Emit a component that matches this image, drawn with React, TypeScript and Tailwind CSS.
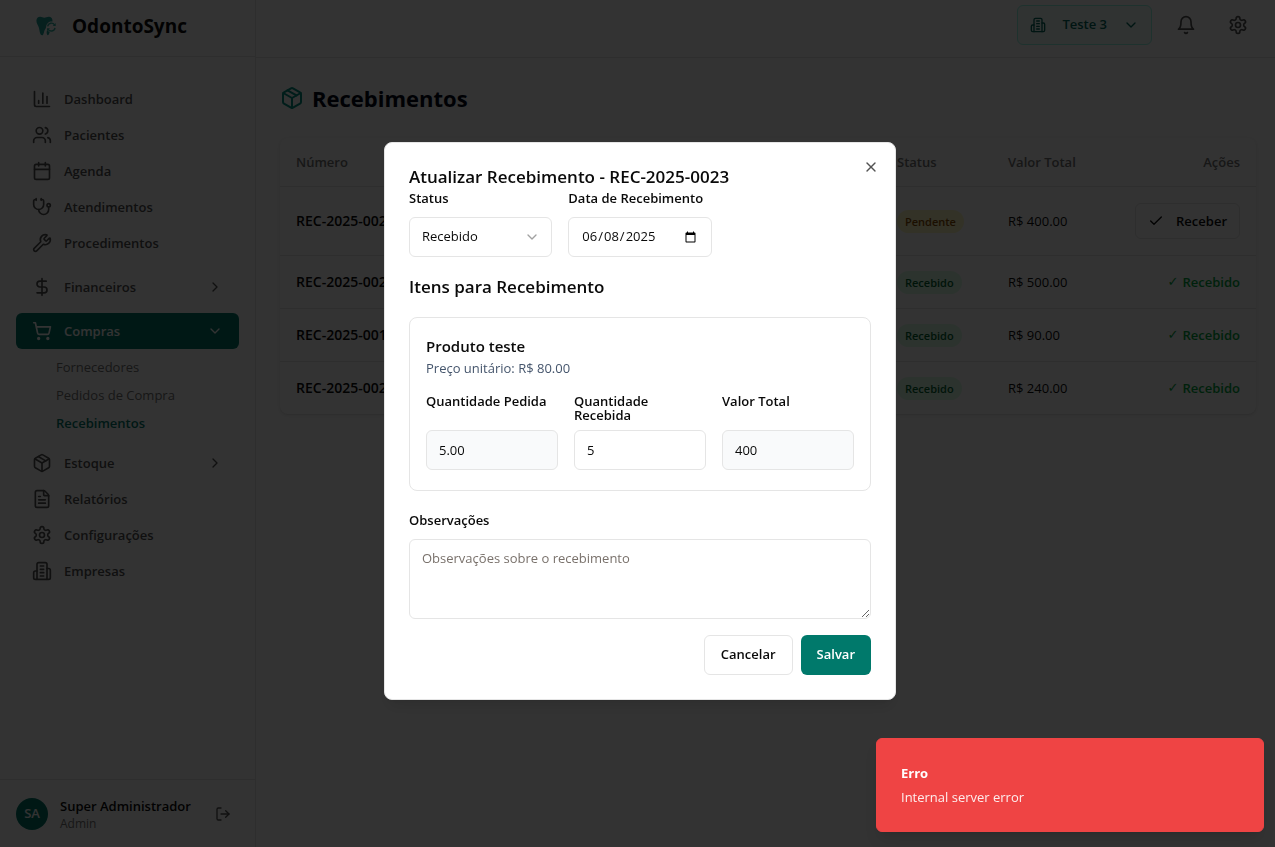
import React from "react";
import {
  Calendar, ChartColumn, Check, ChevronDown, ChevronRight, DollarSign, FileText,
  LogOut, Package, ShoppingCart, Stethoscope, Users, Wrench, X,
} from "lucide-react";

type Icon = React.ComponentType<{ className?: string }>;

function strokeIcon(paths: string[], center?: React.ReactNode): Icon {
  return function StrokeIcon({ className }) {
    return (
      <svg viewBox="0 0 24 24" className={className} fill="none" stroke="currentColor" strokeWidth="2" strokeLinecap="round" strokeLinejoin="round" aria-hidden="true">
        {paths.map((d) => (
          <path key={d} d={d} />
        ))}
        {center}
      </svg>
    );
  };
}

const Building = strokeIcon([
  "M6 22V4a2 2 0 0 1 2-2h8a2 2 0 0 1 2 2v18Z",
  "M6 12H4a2 2 0 0 0-2 2v6a2 2 0 0 0 2 2h2",
  "M18 9h2a2 2 0 0 1 2 2v9a2 2 0 0 1-2 2h-2",
  "M10 6h4",
  "M10 10h4",
  "M10 14h4",
  "M10 18h4",
]);

const Bell = strokeIcon(["M6 8a6 6 0 0 1 12 0c0 7 3 9 3 9H3s3-2 3-9", "M10.3 21a1.94 1.94 0 0 0 3.4 0"]);

const Gear = strokeIcon(
  [
    "M12.22 2h-.44a2 2 0 0 0-2 2v.18a2 2 0 0 1-1 1.73l-.43.25a2 2 0 0 1-2 0l-.15-.08a2 2 0 0 0-2.73.73l-.22.38a2 2 0 0 0 .73 2.73l.15.1a2 2 0 0 1 1 1.72v.51a2 2 0 0 1-1 1.74l-.15.09a2 2 0 0 0-.73 2.73l.22.38a2 2 0 0 0 2.73.73l.15-.08a2 2 0 0 1 2 0l.43.25a2 2 0 0 1 1 1.73V20a2 2 0 0 0 2 2h.44a2 2 0 0 0 2-2v-.18a2 2 0 0 1 1-1.73l.43-.25a2 2 0 0 1 2 0l.15.08a2 2 0 0 0 2.73-.73l.22-.39a2 2 0 0 0-.73-2.73l-.15-.08a2 2 0 0 1-1-1.74v-.5a2 2 0 0 1 1-1.74l.15-.09a2 2 0 0 0 .73-2.73l-.22-.38a2 2 0 0 0-2.73-.73l-.15.08a2 2 0 0 1-2 0l-.43-.25a2 2 0 0 1-1-1.73V4a2 2 0 0 0-2-2z",
  ],
  <circle cx="12" cy="12" r="3" />,
);

const topItems: { label: string; icon: Icon }[] = [
  { label: "Dashboard", icon: ChartColumn },
  { label: "Pacientes", icon: Users },
  { label: "Agenda", icon: Calendar },
  { label: "Atendimentos", icon: Stethoscope },
  { label: "Procedimentos", icon: Wrench },
];

const bottomItems: { label: string; icon: Icon; expandable?: boolean }[] = [
  { label: "Estoque", icon: Package, expandable: true },
  { label: "Relatórios", icon: FileText },
  { label: "Configurações", icon: Gear },
  { label: "Empresas", icon: Building },
];

const rows = [
  { number: "REC-2025-0023", status: "Pendente", total: "R$ 400.00" },
  { number: "REC-2025-0022", status: "Recebido", total: "R$ 500.00" },
  { number: "REC-2025-0019", status: "Recebido", total: "R$ 90.00" },
  { number: "REC-2025-0020", status: "Recebido", total: "R$ 240.00" },
];

function NavItem({ label, icon: I, expandable }: { label: string; icon: Icon; expandable?: boolean }) {
  return (
    <a href="#" className="flex h-9 items-center gap-3 rounded-md px-4 text-[13px] font-semibold text-neutral-600">
      <I className="size-5" />
      <span className="flex-1 pt-0.5">{label}</span>
      {expandable && <ChevronRight className="size-4" />}
    </a>
  );
}

function Logo() {
  return (
    <svg viewBox="0 0 20 20" className="size-5" aria-hidden="true">
      <path
        d="M4 .8C5.600.6 6.800 1.700 8.300 1.700S11.500.5 13.300.8c2.300.4 3.400 2 3.200 4.700-3.200-.5-6 1.700-6.300 5-.1 1.700-.9 2.200-1.500 3.500-.8 1.700-1 5.500-2.600 5.300-2.300-.3-2.500-4.800-3.200-7.600C2.300 9.300.2 7.500.4 4.500.5 2.300 2 1 4 .8Z"
        fill="#1fa098"
      />
      <path d="M11 14.300c.9.900 1.700 1.300 2.700 1.600-.6 1.500-.9 3.200-2.100 3.400-1.200-.8-1.100-3.300-.6-5Z" fill="#1fa098" />
      <path d="M11.700 10.300a3.800 3.800 0 0 1 7-1.300M19 11.800a3.800 3.800 0 0 1-7 1.400" fill="none" stroke="#36b3a5" strokeWidth="1.400" />
      <path d="M19.700 6.900v3h-3ZM11 15.300v-3h3Z" fill="#36b3a5" />
    </svg>
  );
}

function Sidebar() {
  return (
    <aside className="flex w-64 shrink-0 flex-col border-r border-neutral-200 bg-white">
      <div className="flex h-[57px] items-center gap-4 border-b border-neutral-200 pb-1 pl-9">
        <Logo />
        <span className="text-[19px] font-bold text-neutral-950">OdontoSync</span>
      </div>
      <nav className="flex-1 px-4 pt-6">
        {topItems.map((item) => (
          <NavItem key={item.label} {...item} />
        ))}
        <div className="py-2">
          <NavItem label="Financeiros" icon={DollarSign} expandable />
        </div>
        <a href="#" className="flex h-9 items-center gap-3 rounded-md bg-[#00796b] px-4 text-[13px] font-semibold text-white">
          <ShoppingCart className="size-5" />
          <span className="flex-1 pt-0.5">Compras</span>
          <ChevronDown className="size-4" />
        </a>
        <div className="mt-1 mb-2 pl-10 text-[13px] leading-7 text-neutral-500">
          <a href="#" className="block">Fornecedores</a>
          <a href="#" className="block">Pedidos de Compra</a>
          <a href="#" className="block font-semibold text-[#00796b]">Recebimentos</a>
        </div>
        {bottomItems.map((item) => (
          <NavItem key={item.label} {...item} />
        ))}
      </nav>
      <div className="flex h-[68px] items-center gap-3 border-t border-neutral-200 px-4">
        <span className="flex size-8 items-center justify-center rounded-full bg-[#00796b] text-[13px] font-semibold text-white">SA</span>
        <div className="flex-1">
          <p className="text-[13px] leading-5 font-semibold text-neutral-950">Super Administrador</p>
          <p className="text-[12px] leading-4 text-neutral-500">Admin</p>
        </div>
        <button aria-label="Sair" className="p-2 text-neutral-600">
          <LogOut className="size-4" />
        </button>
      </div>
    </aside>
  );
}

function ReceiptsTable() {
  return (
    <div className="overflow-hidden rounded-lg bg-white shadow-sm">
      <table className="w-full text-[13px] leading-5">
        <thead>
          <tr className="h-12 border-b border-neutral-200 text-left text-neutral-500">
            <th className="px-4 font-semibold">Número</th>
            <th className="w-[111px] px-4 font-semibold">Status</th>
            <th className="w-[108px] px-4 font-semibold">Valor Total</th>
            <th className="w-[156px] px-4 text-right font-semibold">Ações</th>
          </tr>
        </thead>
        <tbody>
          {rows.map((row) => {
            const pending = row.status === "Pendente";
            return (
              <tr key={row.number} className="border-b border-neutral-200 last:border-0">
                <td className="px-4 text-[14px] font-semibold text-neutral-950">{row.number}</td>
                <td className="px-4">
                  <span className={pending
                    ? "rounded-full bg-yellow-100 px-2 py-1 text-[11px] leading-4 font-semibold text-yellow-800"
                    : "rounded-full bg-green-100 px-2 py-1 text-[11px] leading-4 font-semibold text-green-800"}>
                    {row.status}
                  </span>
                </td>
                <td className="px-4 text-neutral-950">{row.total}</td>
                <td className="px-4 py-4">
                  {pending ? (
                    <button className="ml-auto flex h-9 items-center gap-3 rounded-md border border-neutral-200 px-3 font-semibold text-neutral-950">
                      <Check className="size-4" />
                      Receber
                    </button>
                  ) : (
                    <div className="flex h-5 items-center justify-end gap-1 font-semibold text-green-600">
                      <span className="font-['DejaVu_Sans',sans-serif] font-normal">✓</span>
                      Recebido
                    </div>
                  )}
                </td>
              </tr>
            );
          })}
        </tbody>
      </table>
    </div>
  );
}

const field = "h-10 w-full rounded-md border border-neutral-200 px-3 text-[13px] text-neutral-950";
const labelStyle = "text-[13px] leading-[14px] font-semibold text-neutral-950";

function ReceiptDialog() {
  return (
    <div className="fixed inset-0 flex items-center justify-center bg-black/80 pb-[5px] pl-[5px]">
      <form role="dialog" aria-labelledby="dialog-title" className="relative w-full max-w-lg rounded-lg border border-neutral-200 bg-white p-6 text-neutral-950 shadow-lg">
        <button type="button" aria-label="Fechar" className="absolute top-4 right-4 text-neutral-600">
          <X className="size-4" />
        </button>
        <h2 id="dialog-title" className="mb-1 text-[17px] leading-5 font-semibold">Atualizar Recebimento - REC-2025-0023</h2>
        <div className="grid grid-cols-3 gap-4">
          <div className="flex flex-col gap-3">
            <label htmlFor="status" className={labelStyle}>Status</label>
            <div className="relative">
              <select id="status" defaultValue="Recebido" className={field + " appearance-none bg-white"}>
                <option>Recebido</option>
                <option>Pendente</option>
              </select>
              <ChevronDown className="pointer-events-none absolute top-3 right-3 size-4 text-neutral-400" />
            </div>
          </div>
          <div className="flex flex-col gap-3">
            <label htmlFor="date" className={labelStyle + " whitespace-nowrap"}>Data de Recebimento</label>
            <input id="date" type="date" defaultValue="2025-06-08" className={field} />
          </div>
        </div>
        <h3 className="my-4 text-[17px] leading-7 font-semibold">Itens para Recebimento</h3>
        <div className="rounded-lg border border-neutral-200 px-4 pt-4 pb-5">
          <h4 className="text-[15px] leading-6 font-semibold">Produto teste</h4>
          <p className="text-[13px] leading-5 text-slate-600">Preço unitário: R$ 80.00</p>
          <div className="mt-4 grid grid-cols-3 gap-4">
            <div className="flex flex-col justify-between gap-2">
              <label htmlFor="ordered" className={labelStyle + " whitespace-nowrap"}>Quantidade Pedida</label>
              <input id="ordered" readOnly defaultValue="5.00" className={field + " bg-gray-50"} />
            </div>
            <div className="flex flex-col justify-between gap-2">
              <label htmlFor="received" className={labelStyle}>Quantidade Recebida</label>
              <input id="received" defaultValue="5" className={field} />
            </div>
            <div className="flex flex-col justify-between gap-2">
              <label htmlFor="total" className={labelStyle}>Valor Total</label>
              <input id="total" readOnly defaultValue="400" className={field + " bg-gray-50"} />
            </div>
          </div>
        </div>
        <div className="mt-[22px] flex flex-col gap-3">
          <label htmlFor="notes" className={labelStyle}>Observações</label>
          <textarea id="notes" placeholder="Observações sobre o recebimento" className="h-20 w-full rounded-md border border-neutral-200 px-3 py-2 text-[13px] leading-5 placeholder:text-stone-500" />
        </div>
        <div className="mt-4 flex justify-end gap-2 text-[13px] font-semibold">
          <button type="button" className="h-10 rounded-md border border-neutral-200 px-4">Cancelar</button>
          <button type="submit" className="h-10 rounded-md bg-[#00796b] px-4 text-white">Salvar</button>
        </div>
      </form>
    </div>
  );
}

export default function App() {
  return (
    <div className="flex min-h-screen bg-white font-['Open_Sans','Noto_Sans',sans-serif]">
      <Sidebar />
      <div className="min-w-0 flex-1 bg-[#fcfcfc]">
        <header className="flex h-[58px] items-center justify-end gap-3.5 border-b border-neutral-200 bg-white pr-[17px] pb-2">
          <button className="flex h-10 items-center gap-4 rounded-md border border-teal-200 bg-teal-50 px-3 text-[13px] font-semibold text-[#00695c]">
            <Building className="size-4" />
            Teste 3
            <ChevronDown className="size-4" />
          </button>
          <div className="flex gap-3 text-neutral-600">
            <button aria-label="Notificações" className="flex size-10 items-center justify-center">
              <Bell className="size-5" />
            </button>
            <button aria-label="Configurações" className="flex size-10 items-center justify-center">
              <Gear className="size-5" />
            </button>
          </div>
        </header>
        <main className="py-6 pr-[19px] pl-6">
          <h1 className="mb-6 flex items-center gap-2 text-[22px] leading-8 font-bold text-slate-950">
            <Package className="size-6 text-[#009080]" />
            Recebimentos
          </h1>
          <ReceiptsTable />
        </main>
      </div>
      <ReceiptDialog />
      <div role="alert" className="fixed right-[11px] bottom-[15px] w-[388px] rounded-md border border-[#ef4444] bg-[#ef4444] p-6 text-white shadow-lg">
        <p className="text-[13px] leading-5 font-bold">Erro</p>
        <p className="mt-1 text-[13px] leading-5 opacity-90">Internal server error</p>
      </div>
    </div>
  );
}
